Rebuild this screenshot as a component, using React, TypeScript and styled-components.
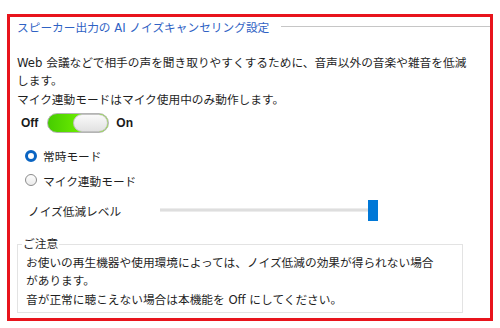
import React from "react";
import styled, { createGlobalStyle } from "styled-components";

const Global = createGlobalStyle`
  html, body { margin: 0; padding: 0; background: #ffffff; }
  body {
    font-family: "DejaVu Sans", "Noto Sans CJK JP", sans-serif;
    font-size: 11.7px;
    color: #1f1f1f;
  }
`;

const Frame = styled.section`
  box-sizing: border-box;
  margin: 14px 0 0 7px;
  width: 486px;
  height: 307px;
  border: 3px solid #e8141c;
  display: flex;
  flex-direction: column;
`;

const TitleRow = styled.div`
  display: flex;
  align-items: center;
  height: 18px;
  padding-left: 7px;
`;

const Title = styled.h1`
  margin: 0;
  font-size: 11.7px;
  font-weight: normal;
  color: #2f62c4;
  white-space: nowrap;
`;

const TitleRule = styled.div`
  flex: 1;
  height: 1px;
  margin-left: 12px;
  background: #c6c6c6;
`;

const Paragraph = styled.p`
  margin: 18.75px 0 0 7px;
  line-height: 18.5px;
  white-space: nowrap;
`;

const ToggleRow = styled.div`
  display: flex;
  align-items: center;
  height: 20px;
  margin-top: 3.75px;
  padding-left: 11px;
`;

const ToggleLabel = styled.span<{ $gap: number }>`
  font-family: "Liberation Sans", Arial, sans-serif;
  font-weight: bold;
  font-size: 12px;
  color: #1a1a1a;
  margin-left: ${(p) => p.$gap}px;
`;

const Switch = styled.div`
  box-sizing: border-box;
  margin-left: 9px;
  width: 62px;
  height: 20px;
  border-radius: 10px;
  border: 1px solid #b4b4b4;
  background: linear-gradient(to right, #46cc00, #70f000 60%, #84fb00);
  display: flex;
  justify-content: flex-end;
  overflow: hidden;
`;

const Knob = styled.div`
  box-sizing: border-box;
  width: 35px;
  height: 18px;
  border-radius: 9px;
  border: 1px solid #c2c2c2;
  background: linear-gradient(to bottom, #fafafa, #e2e2e2);
`;

const RadioGroup = styled.div`
  margin-top: 10.5px;
  display: flex;
  flex-direction: column;
`;

const RadioRow = styled.label`
  display: flex;
  align-items: center;
  height: 24.5px;
  padding-left: 15px;
`;

const RadioDot = styled.span<{ $on: boolean }>`
  box-sizing: border-box;
  width: 12px;
  height: 12px;
  border-radius: 50%;
  background: ${(p) => (p.$on ? "#ffffff" : "linear-gradient(#fdfdfd, #ebebeb)")};
  border: ${(p) => (p.$on ? "3.5px solid #0a64c2" : "1px solid #8c8c8c")};
  margin-right: 6px;
`;

const LevelRow = styled.div`
  display: flex;
  align-items: center;
  height: 22px;
  margin-top: 6.5px;
  padding-left: 18px;
`;

const LevelLabel = styled.span`
  width: 132px;
`;

const Track = styled.div`
  box-sizing: border-box;
  width: 208px;
  height: 4px;
  background: #dedede;
  border-top: 1px solid #ececec;
  border-bottom: 1px solid #ececec;
`;

const Thumb = styled.div`
  width: 10px;
  height: 21px;
  background: #0078d7;
`;

const Notice = styled.fieldset`
  box-sizing: border-box;
  margin: 14px 0 0 7px;
  width: 446px;
  padding: 0 0 3px 4px;
  border: 1px solid #e3e3e3;
  min-inline-size: 0;
`;

const NoticeLegend = styled.legend`
  padding: 0 1px;
  line-height: 18.5px;
`;

const NoticeText = styled.p`
  margin: 0 0 0 4px;
  line-height: 18.5px;
  white-space: nowrap;
`;

export default function App() {
  return (
    <>
      <Global />
      <Frame>
        <TitleRow>
          <Title>スピーカー出力の AI ノイズキャンセリング設定</Title>
          <TitleRule />
        </TitleRow>
        <Paragraph>
          Web 会議などで相手の声を聞き取りやすくするために、音声以外の音楽や雑音を低減
          <br />
          します。
          <br />
          マイク連動モードはマイク使用中のみ動作します。
        </Paragraph>
        <ToggleRow>
          <ToggleLabel $gap={0}>Off</ToggleLabel>
          <Switch>
            <Knob />
          </Switch>
          <ToggleLabel $gap={7}>On</ToggleLabel>
        </ToggleRow>
        <RadioGroup>
          <RadioRow>
            <RadioDot $on={true} />
            常時モード
          </RadioRow>
          <RadioRow>
            <RadioDot $on={false} />
            マイク連動モード
          </RadioRow>
        </RadioGroup>
        <LevelRow>
          <LevelLabel>ノイズ低減レベル</LevelLabel>
          <Track />
          <Thumb />
        </LevelRow>
        <Notice>
          <NoticeLegend>ご注意</NoticeLegend>
          <NoticeText>
            お使いの再生機器や使用環境によっては、ノイズ低減の効果が得られない場合
            <br />
            があります。
            <br />
            音が正常に聴こえない場合は本機能を Off にしてください。
          </NoticeText>
        </Notice>
      </Frame>
    </>
  );
}
